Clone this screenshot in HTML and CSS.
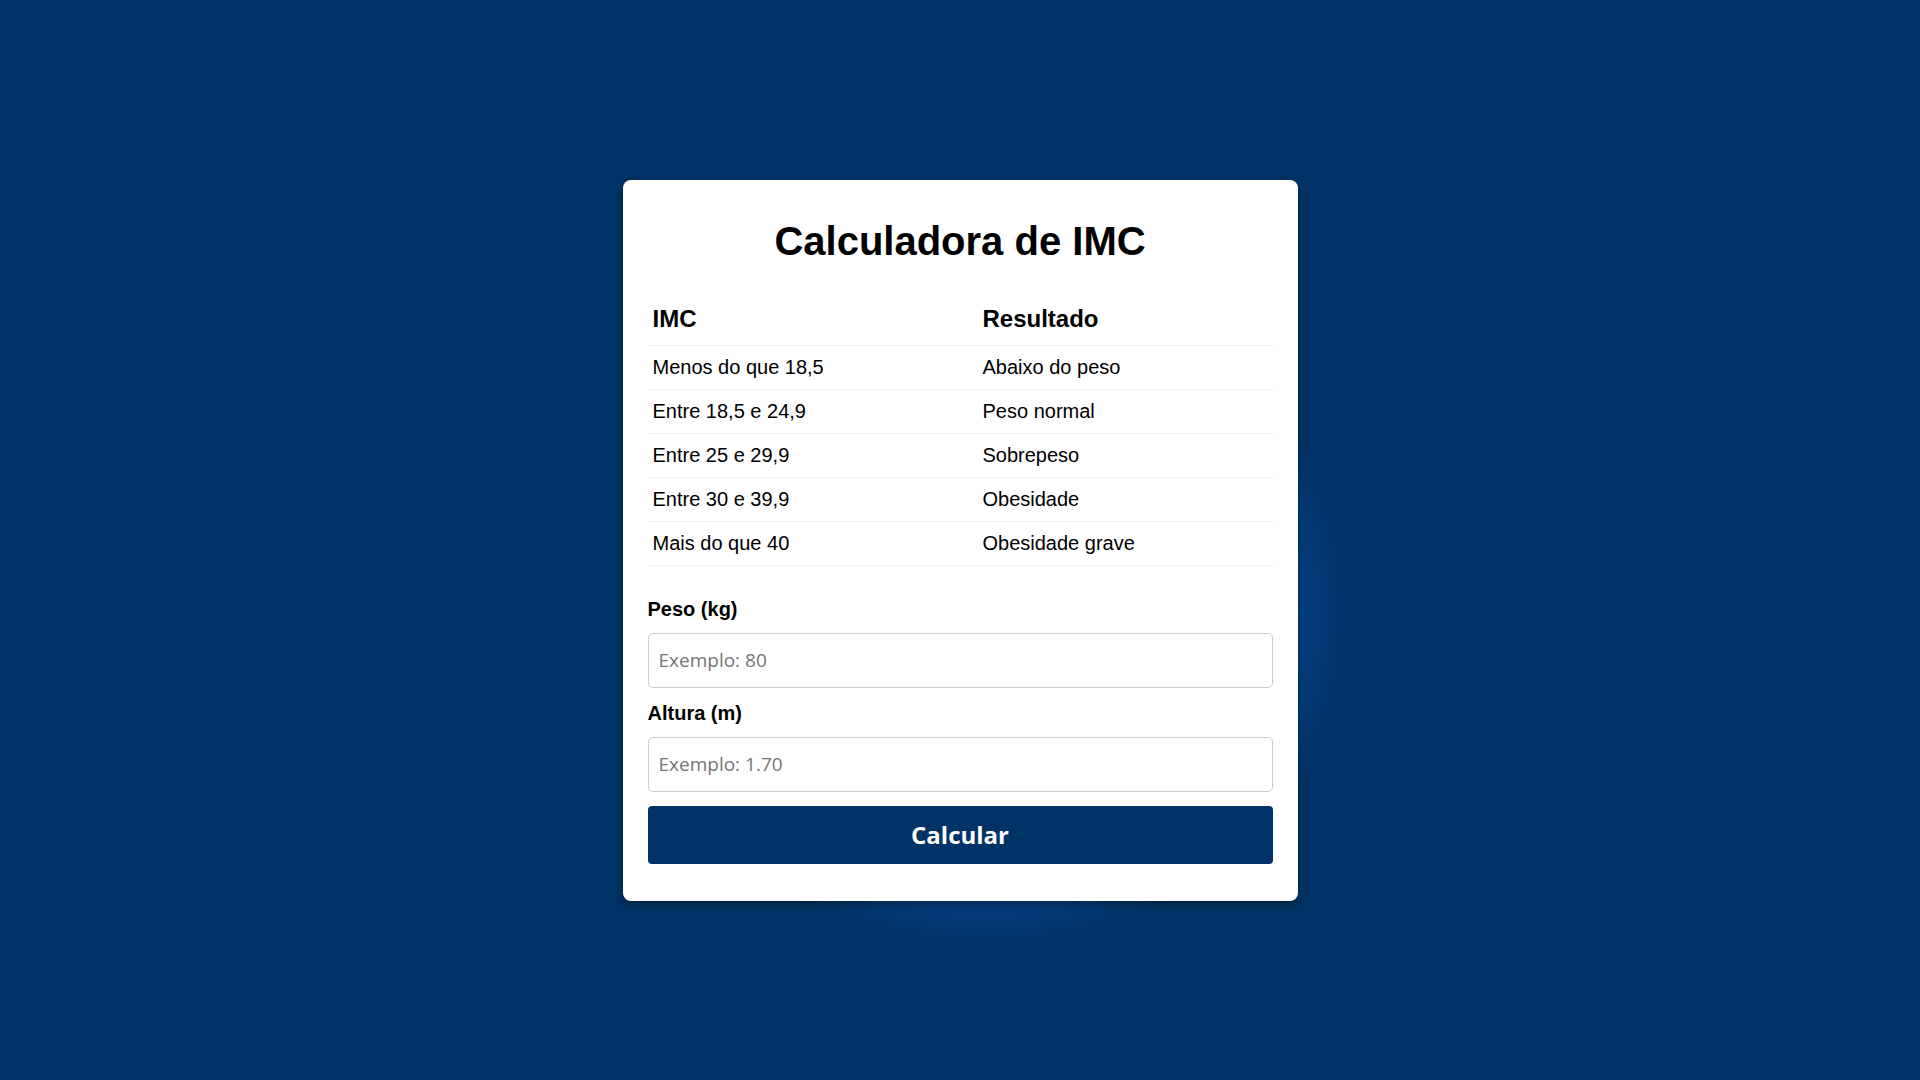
FILE: index.html
```html
<!DOCTYPE html>
<html lang="pt-BR">
<head>
    <meta charset="UTF-8" />
    <meta name="viewport" content="width=device-width, initial-scale=1.0" />
    <title>Calculadora de IMC</title>
    <link rel="stylesheet" href="styles.css">
</head>
<body>
  <div class="container">
    <h1>Calculadora de IMC</h1>

    <table class="tabela">
      <thead>
        <tr>
          <th>IMC</th>
          <th>Resultado</th>
        </tr>
      </thead>
      <tbody>
        <tr><td>Menos do que 18,5</td><td>Abaixo do peso</td></tr>
        <tr><td>Entre 18,5 e 24,9</td><td>Peso normal</td></tr>
        <tr><td>Entre 25 e 29,9</td><td>Sobrepeso</td></tr>
        <tr><td>Entre 30 e 39,9</td><td>Obesidade</td></tr>
        <tr><td>Mais do que 40</td><td>Obesidade grave</td></tr>
      </tbody>
    </table>

    <label for="peso">Peso (kg)</label>
    <input type="text" id="peso" class="campo" placeholder="Exemplo: 80" />

    <label for="altura">Altura (m)</label>
    <input type="text" id="altura" class="campo" placeholder="Exemplo: 1.70" />

    <button type="button" class="botao" onclick="calcular()">Calcular</button>

    <div class="resultado" id="resultado"></div>
  </div>

  <script>
    function calcular() {
      var peso = parseFloat(document.getElementById("peso").value.replace(",", "."));
      var altura = parseFloat(document.getElementById("altura").value.replace(",", "."));
      var resultado = document.getElementById("resultado");

      if (!peso || !altura) {
        resultado.innerText = "Preencha peso e altura";
        resultado.style.display = "block";
        return;
      }

      var imc = peso / (altura * altura);
      var texto = "Obesidade grave";

      if (imc < 18.5) texto = "Abaixo do peso";
      else if (imc < 25) texto = "Peso normal";
      else if (imc < 30) texto = "Sobrepeso";
      else if (imc < 40) texto = "Obesidade";

      resultado.innerText = "Seu IMC: " + imc.toFixed(1) + " - " + texto;
      resultado.style.display = "block";
    }
  </script>
</body>
</html>
```

FILE: styles.css
```css
body {
    margin: 0;
    height: 100vh;
    font-family: "Liberation Sans", Arial, sans-serif;
    font-size: 20px;
    color: #000;
    background: radial-gradient(ellipse 365px 335px at 985px 612px, #0a4c98 0, #074790 78%, #003366 100%);
    background-color: #003366;
    display: flex;
    align-items: center;
    justify-content: center;
}

.container {
    background: #fff;
    width: 625px;
    padding: 25px;
    border-radius: 8px;
    box-shadow: 0 4px 10px rgba(0, 0, 0, 0.35);
}

h1 {
    font-size: 40px;
    line-height: 46px;
    text-align: center;
    margin: 13px 0 33px;
}

.tabela {
    width: 100%;
    border-collapse: collapse;
    margin-bottom: 32px;
}

.tabela th,
.tabela td {
    text-align: left;
    padding: 10px 5px;
    border-bottom: 1px solid #eee;
}

.tabela th {
    font-size: 24px;
    line-height: 28px;
    padding: 8px 5px 12px;
}

.tabela th:first-child {
    width: 320px;
}

.tabela td {
    line-height: 23px;
}

label {
    display: block;
    font-weight: bold;
    line-height: 23px;
    margin-bottom: 12px;
}

.campo {
    display: block;
    width: 100%;
    height: 55px;
    box-sizing: border-box;
    padding: 0 10px;
    margin: 0 0 14px;
    border: 1px solid #ccc;
    border-radius: 5px;
    font-family: "Open Sans", sans-serif;
    font-size: 19px;
}

.campo::placeholder {
    color: #757575;
}

.botao {
    display: block;
    width: 100%;
    height: 58px;
    margin-bottom: 12px;
    background: #003366;
    color: #fff;
    border: none;
    border-radius: 4px;
    font-family: "Open Sans", sans-serif;
    font-size: 24px;
    font-weight: bold;
    cursor: pointer;
}

.botao:hover {
    background: #00264d;
}

.resultado {
    display: none;
    text-align: center;
    font-weight: bold;
}
```
